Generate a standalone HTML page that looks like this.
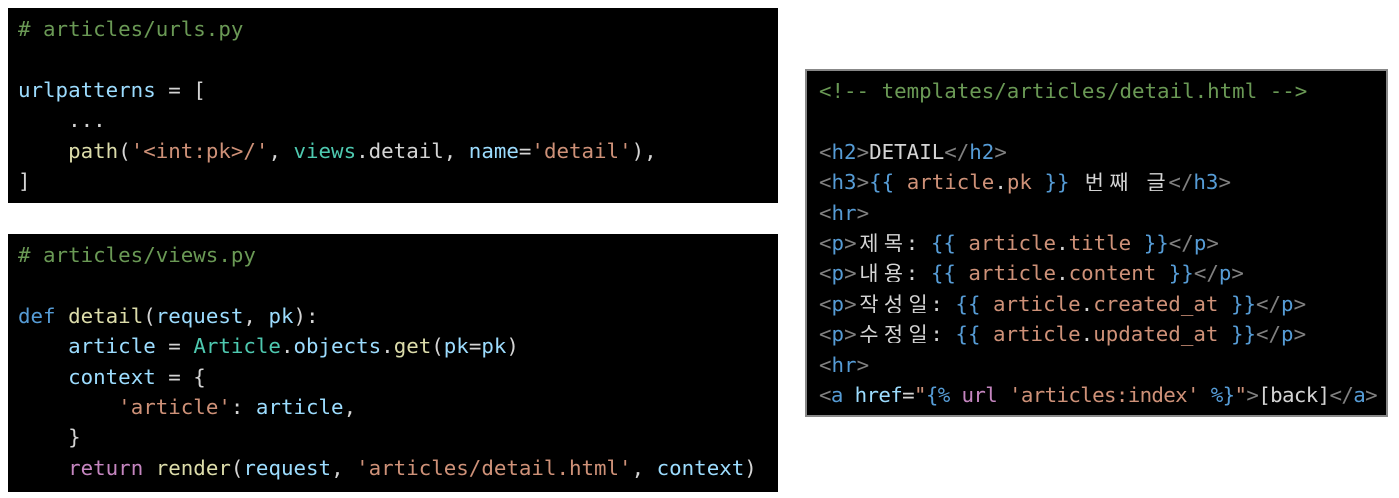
<!DOCTYPE html>
<html><head><meta charset="utf-8"><style>
body{margin:0;background:#fff;width:1399px;height:498px;position:relative;overflow:hidden}
.b{position:absolute;background:#000;font-family:"DejaVu Sans Mono","Liberation Mono","Noto Sans CJK KR",monospace;font-size:20.8px;line-height:30.4px;color:#d4d4d4;white-space:pre;box-sizing:border-box;overflow:hidden}
.b div{height:30.4px}
.k{display:inline-block;width:24.6px;text-align:center;font-family:"Noto Sans CJK KR",sans-serif;line-height:20px;height:20px;overflow:hidden;vertical-align:-2px}
.c{color:#6a9955}.v{color:#9cdcfe}.f{color:#dcdcaa}.s{color:#ce9178}.t{color:#4ec9b0}.d{color:#569cd6}.r{color:#c586c0}.g{color:#808080}
</style></head><body>
<div class="b" style="left:8px;top:8px;width:770px;height:195px;padding:6px 0 0 10px"><span class="c"># articles/urls.py</span>

<span class="v">urlpatterns</span> = [
    ...
    <span class="f">path</span>(<span class="s">'&lt;int:pk&gt;/'</span>, <span class="t">views</span>.detail, <span class="v">name</span>=<span class="s">'detail'</span>),
]</div>
<div class="b" style="left:8px;top:234px;width:770px;height:258px;padding:6px 0 0 10px"><span class="c"># articles/views.py</span>

<span class="d">def</span> <span class="f">detail</span>(<span class="v">request</span>, <span class="v">pk</span>):
    <span class="v">article</span> = <span class="t">Article</span>.<span class="v">objects</span>.<span class="f">get</span>(<span class="v">pk</span>=<span class="v">pk</span>)
    <span class="v">context</span> = {
        <span class="s">'article'</span>: <span class="v">article</span>,
    }
    <span class="r">return</span> <span class="f">render</span>(<span class="v">request</span>, <span class="s">'articles/detail.html'</span>, <span class="v">context</span>)</div>
<div class="b" style="left:805px;top:69px;width:583px;height:348px;padding:5px 0 0 12px;border:2px solid #888;white-space:normal"><div style="white-space:pre"><span class="c">&lt;!-- templates/articles/detail.html --&gt;</span></div>
<div></div>
<div style="white-space:pre"><span class="g">&lt;</span><span class="d">h2</span><span class="g">&gt;</span>DETAIL<span class="g">&lt;/</span><span class="d">h2</span><span class="g">&gt;</span></div>
<div style="white-space:pre"><span class="g">&lt;</span><span class="d">h3</span><span class="g">&gt;</span><span class="d">{{</span> <span class="s">article</span>.<span class="s">pk</span> <span class="d">}}</span> <span class="k">번</span><span class="k">째</span> <span class="k">글</span><span class="g">&lt;/</span><span class="d">h3</span><span class="g">&gt;</span></div>
<div style="white-space:pre"><span class="g">&lt;</span><span class="d">hr</span><span class="g">&gt;</span></div>
<div style="white-space:pre"><span class="g">&lt;</span><span class="d">p</span><span class="g">&gt;</span><span class="k">제</span><span class="k">목</span>: <span class="d">{{</span> <span class="s">article</span>.<span class="s">title</span> <span class="d">}}</span><span class="g">&lt;/</span><span class="d">p</span><span class="g">&gt;</span></div>
<div style="white-space:pre"><span class="g">&lt;</span><span class="d">p</span><span class="g">&gt;</span><span class="k">내</span><span class="k">용</span>: <span class="d">{{</span> <span class="s">article</span>.<span class="s">content</span> <span class="d">}}</span><span class="g">&lt;/</span><span class="d">p</span><span class="g">&gt;</span></div>
<div style="white-space:pre"><span class="g">&lt;</span><span class="d">p</span><span class="g">&gt;</span><span class="k">작</span><span class="k">성</span><span class="k">일</span>: <span class="d">{{</span> <span class="s">article</span>.<span class="s">created_at</span> <span class="d">}}</span><span class="g">&lt;/</span><span class="d">p</span><span class="g">&gt;</span></div>
<div style="white-space:pre"><span class="g">&lt;</span><span class="d">p</span><span class="g">&gt;</span><span class="k">수</span><span class="k">정</span><span class="k">일</span>: <span class="d">{{</span> <span class="s">article</span>.<span class="s">updated_at</span> <span class="d">}}</span><span class="g">&lt;/</span><span class="d">p</span><span class="g">&gt;</span></div>
<div style="white-space:pre"><span class="g">&lt;</span><span class="d">hr</span><span class="g">&gt;</span></div>
<div style="white-space:pre;letter-spacing:-0.65px"><span class="g">&lt;</span><span class="d">a</span> <span class="v">href</span>=<span class="s">"</span><span class="d">{%</span> <span class="r">url</span> <span class="s">'articles:index'</span> <span class="d">%}</span><span class="s">"</span><span class="g">&gt;</span>[back]<span class="g">&lt;/</span><span class="d">a</span><span class="g">&gt;</span></div></div>
</body></html>
